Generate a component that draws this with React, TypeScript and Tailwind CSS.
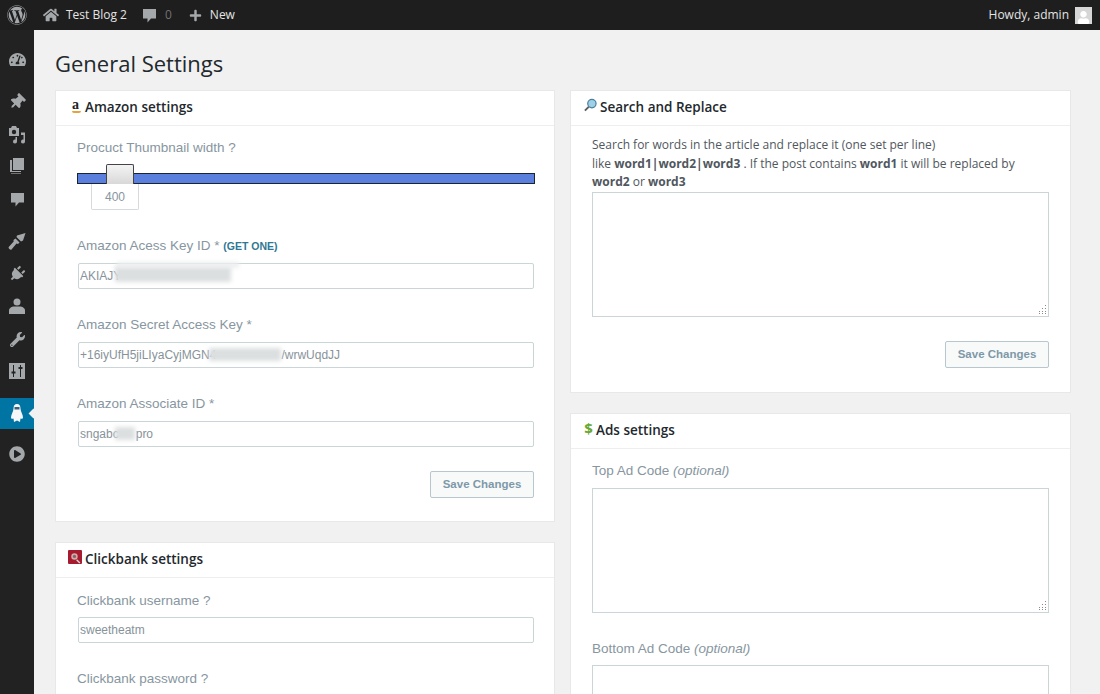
import { ReactNode } from "react";
import {
  FaWordpress,
  FaHome,
  FaPlus,
  FaTachometerAlt,
  FaThumbtack,
  FaPlug,
  FaUser,
  FaWrench,
  FaPlayCircle,
} from "react-icons/fa";

const iconCls = "text-[#a5a8aa]";

function BubbleIcon({ size = 15 }: { size?: number }) {
  return (
    <svg width={size} height={size} viewBox="0 0 15 15" fill="#a5a8aa">
      <path d="M1 1h13v9.500H9L5.500 14.500V10.500H1z" />
    </svg>
  );
}

function MediaIcon() {
  return (
    <svg width="18" height="19" viewBox="0 0 18 19" fill="#a5a8aa">
      <path d="M1 3h2l1-2h4l1 2h2v8H1z" />
      <circle cx="6" cy="7" r="2.200" fill="#222" />
      <path d="M13 7.500h4v9a2 2 0 1 1-1.500-1.900V10h-2.500zM9 14v2.500a2 2 0 1 1-1.500-1.900V12H9z" />
    </svg>
  );
}

function PagesIcon() {
  return (
    <svg width="14" height="16" viewBox="0 0 14 16" fill="#a5a8aa">
      <path d="M3 0h11v12H3z" />
      <path d="M2 2v11h9v1H0V2z" />
      <path d="M1 15h10v1H1z" opacity="0.600" />
    </svg>
  );
}

function BrushIcon() {
  return (
    <svg width="18" height="18" viewBox="0 0 18 18" fill="#a5a8aa">
      <path d="M9 3.500L17.500 1 15 8.500l-2 1-4.500-4.500z" />
      <path d="M7.500 6.500l4 4-1.500 1.500-1.500-.5-5 6c-1 .8-3.500-.8-2.800-2.500l5-5.500-.2-1.500z" />
    </svg>
  );
}

function BustIcon() {
  return (
    <svg width="16" height="16" viewBox="0 0 16 16" fill="#a5a8aa">
      <circle cx="8" cy="4" r="3.500" />
      <path d="M0 16v-3.500C0 10 3 8.500 5 8.500h6c2 0 5 1.500 5 4V16z" />
    </svg>
  );
}

function SettingsIcon() {
  return (
    <svg width="16" height="16" viewBox="0 0 16 16">
      <rect width="16" height="16" fill="#a5a8aa" />
      <path d="M4.500 2v12M11.500 2v12" stroke="#222" strokeWidth="1" />
      <path d="M2.500 9.500h4M9.500 5h4" stroke="#222" strokeWidth="1.800" />
    </svg>
  );
}

function MascotIcon() {
  return (
    <svg width="12" height="20" viewBox="0 0 12 20">
      <path d="M6 0c2.500 0 3.500 2 3.500 4.500 0 3 2.500 6 2.500 9 0 1.500-1.500 1.500-2.500 1L9 18l-3-1.500L3 18l-.5-3.500c-1 .5-2.500.5-2.500-1 0-3 2.500-6 2.500-9C2.500 2 3.500 0 6 0z" fill="#f4f6f7" />
      <path d="M3.500 3h5v2.500h-5z" fill="#3f5f78" />
    </svg>
  );
}

const menu: { icon: ReactNode; cls: string }[] = [
  { icon: <FaTachometerAlt size={17} className={iconCls} />, cls: "mt-[13px]" },
  { icon: <FaThumbtack size={16} className={`${iconCls} rotate-45`} />, cls: "mt-[11px]" },
  { icon: <MediaIcon />, cls: "" },
  { icon: <PagesIcon />, cls: "" },
  { icon: <BubbleIcon size={15} />, cls: "mt-px" },
  { icon: <BrushIcon />, cls: "mt-[10px]" },
  { icon: <FaPlug size={16} className={`${iconCls} rotate-45`} />, cls: "mt-px" },
  { icon: <BustIcon />, cls: "" },
  { icon: <FaWrench size={15} className={iconCls} />, cls: "mt-px" },
  { icon: <SettingsIcon />, cls: "" },
];

function Card({
  icon,
  title,
  children,
  className,
  iconClass,
}: {
  icon: ReactNode;
  title: string;
  children: ReactNode;
  className?: string;
  iconClass?: string;
}) {
  return (
    <section className={`bg-white border border-[#e8e8e8] ${className ?? ""}`}>
      <h2 className="h-[35px] pb-[2px] border-b border-[#eeeeee] flex items-center pl-[13px] gap-[3px] font-['Open_Sans',sans-serif] text-[13.500px] font-semibold text-[#23282d]">
        <span className={`h-[14px] flex items-center justify-center -mt-1 ${iconClass ?? "w-[13px]"}`}>{icon}</span>
        {title}
      </h2>
      {children}
    </section>
  );
}

function Label({ children, className }: { children: ReactNode; className?: string }) {
  return <div className={`h-4 pt-px text-[13.500px] leading-[16px] text-[#8796a0] ${className ?? ""}`}>{children}</div>;
}

function Field({ value, children, className }: { value: string; children?: ReactNode; className?: string }) {
  return (
    <div className={`relative ml-px w-[456px] h-[26px] border border-[#c9d5d6] rounded-[2px] flex items-center pl-px text-[12px] text-[#87939a] bg-white ${className ?? ""}`}>
      {value}
      {children}
    </div>
  );
}

function Smudge({ className }: { className: string }) {
  return <div className={`absolute blur-[2px] ${className}`} />;
}

function SaveButton() {
  return (
    <button className="h-[27px] w-[104px] border border-[#b7c7cd] rounded-[2px] bg-[#f8fafa] text-[11.500px] font-bold text-[#7e98a8]">
      Save Changes
    </button>
  );
}

function Textarea({ className }: { className?: string }) {
  return (
    <div className={`relative w-[457px] h-[125px] border border-[#c9d5d6] bg-white ${className ?? ""}`}>
      <svg width="10" height="10" viewBox="0 0 10 10" className="absolute right-[1px] bottom-[1px]" fill="#8a8a8a">
        <rect x="8" y="0" width="1" height="1" />
        <rect x="8" y="3" width="1" height="1" />
        <rect x="5" y="3" width="1" height="1" />
        <rect x="8" y="6" width="1" height="1" />
        <rect x="5" y="6" width="1" height="1" />
        <rect x="2" y="6" width="1" height="1" />
        <rect x="8" y="8" width="1" height="1" />
        <rect x="5" y="8" width="1" height="1" />
        <rect x="2" y="8" width="1" height="1" />
      </svg>
    </div>
  );
}

export default function App() {
  return (
    <div className="h-[694px] w-[1100px] overflow-hidden flex flex-col bg-[#f1f1f1] font-['Liberation_Sans',Arial,sans-serif]">
      <header className="h-[30px] shrink-0 bg-[#1e1e1e] flex items-center font-['Open_Sans',sans-serif] text-[12px] text-[#e4e4e4]">
        <FaWordpress size={20} className="ml-[7px] text-[#a5a8aa]" />
        <FaHome size={16} className="ml-[16px] text-[#a5a8aa]" />
        <span className="ml-[7px]">Test Blog 2</span>
        <span className="ml-[15px]">
          <BubbleIcon />
        </span>
        <span className="ml-[8px] text-[#6f7275]">0</span>
        <FaPlus size={13} className="ml-[17px] text-[#a5a8aa]" />
        <span className="ml-[8px]">New</span>
        <span className="ml-auto">Howdy, admin</span>
        <div className="ml-[6px] mr-[8px] w-[17px] h-[17px] bg-[#d6d6d6] flex items-end justify-center overflow-hidden">
          <FaUser size={13} className="text-white" />
        </div>
      </header>

      <div className="flex flex-1 min-h-0">
        <nav className="w-[34px] shrink-0 bg-[#222222] flex flex-col items-stretch">
          {menu.map((m, i) => (
            <div key={i} className={`h-8 flex items-center justify-center ${m.cls}`}>
              {m.icon}
            </div>
          ))}
          <div className="relative h-[31px] mt-[11px] bg-[#0074a2] flex items-center justify-center">
            <MascotIcon />
            <div className="absolute right-[-3px] top-[12px] w-[7px] h-[7px] rotate-45 bg-[#f1f1f1]" />
          </div>
          <div className="h-8 mt-[9px] flex items-center justify-center">
            <FaPlayCircle size={16} className={iconCls} />
          </div>
        </nav>

        <main className="flex-1 min-w-0 pl-[21px]">
          <h1 className="h-[60px] flex items-center pt-[6px] font-['Open_Sans',sans-serif] text-[22px] text-[#23282d]">General Settings</h1>

          <div className="flex gap-[15px] items-start">
            <div className="w-[500px] flex flex-col gap-5">
              <Card
                title="Amazon settings"
                icon={
                  <span className="relative font-['Liberation_Serif',serif] font-bold text-[14px] leading-none text-[#222]">
                    a
                    <span className="absolute left-0 bottom-[-1px] w-[9px] h-[2px] rounded-b-full bg-[#e9a23b]" />
                  </span>
                }
                className="h-[432px]"
              >
                <div className="pl-[21px] pt-[13px]">
                  <Label>Procuct Thumbnail width ?</Label>
                  <div className="relative mt-[18px] w-[458px] h-[11px] bg-[#5b7fdc] border border-[#1a2433]">
                    <div className="absolute left-[28px] top-[-10px] w-[28px] h-[20px] border border-[#444] border-b-0 rounded-t-[2px] bg-gradient-to-b from-[#f4f4f4] to-[#d8d8d8]" />
                  </div>
                  <div className="ml-[14px] w-[48px] h-[26px] border border-t-0 border-[#d5dadc] rounded-b-[2px] flex items-center justify-center text-[12px] text-[#8796a0]">400</div>

                  <Label className="mt-[27px]">
                    Amazon Acess Key ID * <span className="text-[10.500px] leading-none font-bold text-[#2f7895]">(GET ONE)</span>
                  </Label>
                  <Field value="AKIAJY" className="mt-[10px]">
                    <Smudge className="left-[36px] top-[2px] w-[116px] h-[16px] bg-[#dcdfe0]" />
                    <Smudge className="left-[38px] top-[-2px] w-[122px] h-[6px] bg-[#eceeef]" />
                  </Field>

                  <Label className="mt-[27px]">Amazon Secret Access Key *</Label>
                  <Field value="+16iyUfH5jiLIyaCyjMGN4" className="mt-[10px]">
                    <span className="ml-[65px]">/wrwUqdJJ</span>
                    <Smudge className="left-[130px] top-[5px] w-[72px] h-[13px] bg-[#dcdfe0]" />
                  </Field>

                  <Label className="mt-[27px]">Amazon Associate ID *</Label>
                  <Field value="sngabc" className="mt-[10px]">
                    <span className="ml-[17px]">pro</span>
                    <Smudge className="left-[36px] top-[5px] w-[20px] h-[13px] bg-[#dcdfe0]" />
                  </Field>

                  <div className="mt-[24px] ml-[353px]">
                    <SaveButton />
                  </div>
                </div>
              </Card>

              <Card
                title="Clickbank settings"
                icon={
                  <svg width="14" height="14" viewBox="0 0 13 13" className="shrink-0 -ml-px">
                    <rect width="13" height="13" rx="1" fill="#a61b30" />
                    <circle cx="6" cy="6" r="3" fill="#d9a9a9" />
                    <circle cx="6" cy="6" r="1.500" fill="#7a6a6a" />
                    <path d="M8 9l3 3" stroke="#ddd" strokeWidth="1.200" />
                  </svg>
                }
                className="h-[200px]"
              >
                <div className="pl-[21px] pt-[14px]">
                  <Label>Clickbank username ?</Label>
                  <Field value="sweetheatm" className="mt-[9px]" />
                  <Label className="mt-[27px]">Clickbank password ?</Label>
                </div>
              </Card>
            </div>

            <div className="w-[501px] flex flex-col gap-5">
              <Card
                title="Search and Replace"
                icon={
                  <svg width="14" height="14" viewBox="0 0 14 14">
                    <circle cx="8.500" cy="5.500" r="4.500" fill="#9fd0e8" stroke="#4a7f9c" strokeWidth="1.300" />
                    <path d="M5 9l-4 4" stroke="#5c5c5c" strokeWidth="2" />
                  </svg>
                }
                className="h-[303px]"
              >
                <div className="pl-[21px] pt-[10px]">
                  <p className="font-['Open_Sans',sans-serif] text-[12px] leading-[18.500px] text-[#50575e] w-[450px]">
                    Search for words in the article and replace it (one set per line)
                    <br />
                    like <b className="font-bold">word1|word2|word3</b> . If the post contains <b className="font-bold">word1</b> it will be replaced by{" "}
                    <b className="font-bold">word2</b> or <b className="font-bold">word3</b>
                  </p>
                  <Textarea />
                  <div className="mt-[24px] ml-[353px]">
                    <SaveButton />
                  </div>
                </div>
              </Card>

              <Card
                title="Ads settings"
                icon={<span className="font-bold text-[15px] leading-none text-[#6aa832]">$</span>}
                iconClass="w-[9px]"
                className="h-[320px]"
              >
                <div className="pl-[21px] pt-[13px]">
                  <Label>
                    Top Ad Code <i>(optional)</i>
                  </Label>
                  <Textarea className="mt-[10px]" />
                  <Label className="mt-[27px]">
                    Bottom Ad Code <i>(optional)</i>
                  </Label>
                  <Textarea className="mt-[9px]" />
                </div>
              </Card>
            </div>
          </div>
        </main>
      </div>
    </div>
  );
}
